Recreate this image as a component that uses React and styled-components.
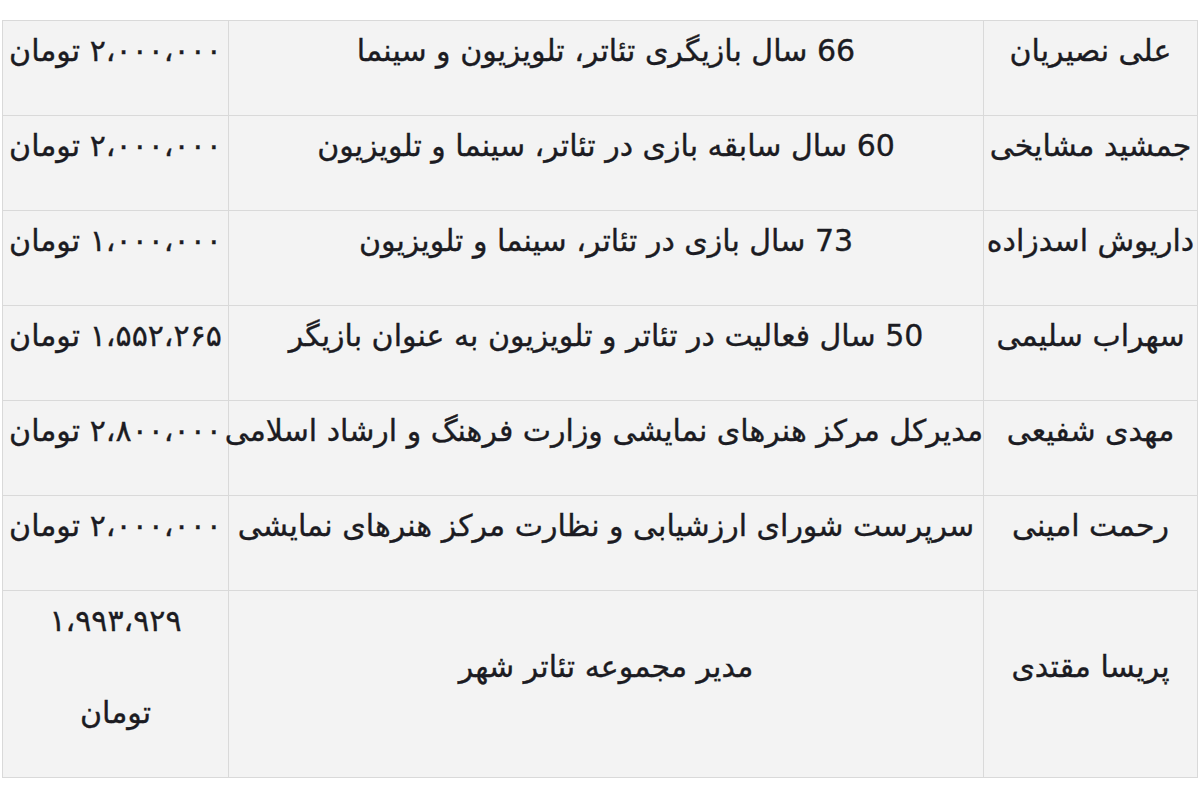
import React from 'react';
import styled, { createGlobalStyle } from 'styled-components';

const GlobalStyle = createGlobalStyle`
    html, body {
        margin: 0;
        padding: 0;
        background: #ffffff;
    }
    body {
        font-family: "DejaVu Sans", "Noto Sans", sans-serif;
    }
`;

const Page = styled.div`
    padding: 20px 3px 0 2px;
`;

const SalaryTable = styled.table`
    width: 1195px;
    direction: rtl;
    table-layout: fixed;
    border-collapse: collapse;
    background: #f3f3f3;
    border: 1px solid #d7d7d7;
    color: #1b1b22;
    font-family: "DejaVu Sans", sans-serif;
    font-size: 30px;
    -webkit-text-stroke: 0.35px #1b1b22;
`;

const Col = styled.col`
    width: ${(props) => props.$width}px;
`;

const Cell = styled.td`
    border: 1px solid #d9d9d9;
    padding: 1px 0;
    text-align: center;
    vertical-align: middle;
    white-space: nowrap;
    overflow: visible;

    p {
        margin: 0 0 34px;
        line-height: 58px;
    }
`;

const rows = [
    { name: 'علی نصیریان', role: '66 سال بازیگری تئاتر، تلویزیون و سینما', pay: ['۲،۰۰۰،۰۰۰ تومان'] },
    { name: 'جمشید مشایخی', role: '60 سال سابقه بازی در تئاتر، سینما و تلویزیون', pay: ['۲،۰۰۰،۰۰۰ تومان'] },
    { name: 'داریوش اسدزاده', role: '73 سال بازی در تئاتر، سینما و تلویزیون', pay: ['۱،۰۰۰،۰۰۰ تومان'] },
    { name: 'سهراب سلیمی', role: '50 سال فعالیت در تئاتر و تلویزیون به عنوان بازیگر', pay: ['۱،۵۵۲،۲۶۵ تومان'] },
    { name: 'مهدی شفیعی', role: 'مدیرکل مرکز هنرهای نمایشی وزارت فرهنگ و ارشاد اسلامی', pay: ['۲،۸۰۰،۰۰۰ تومان'] },
    { name: 'رحمت امینی', role: 'سرپرست شورای ارزشیابی و نظارت مرکز هنرهای نمایشی', pay: ['۲،۰۰۰،۰۰۰ تومان'] },
    { name: 'پریسا مقتدی', role: 'مدیر مجموعه تئاتر شهر', pay: ['۱،۹۹۳،۹۲۹', 'تومان'] },
];

const App = () => {
    return (
        <>
            <GlobalStyle />
            <Page>
                <SalaryTable>
                    <colgroup>
                        <Col $width={214} />
                        <Col $width={755} />
                        <Col $width={226} />
                    </colgroup>
                    <tbody>
                        {rows.map((row) => (
                            <tr key={row.name}>
                                <Cell><p>{row.name}</p></Cell>
                                <Cell><p>{row.role}</p></Cell>
                                <Cell>
                                    {row.pay.map((line) => (
                                        <p key={line}>{line}</p>
                                    ))}
                                </Cell>
                            </tr>
                        ))}
                    </tbody>
                </SalaryTable>
            </Page>
        </>
    );
};

export default App;
